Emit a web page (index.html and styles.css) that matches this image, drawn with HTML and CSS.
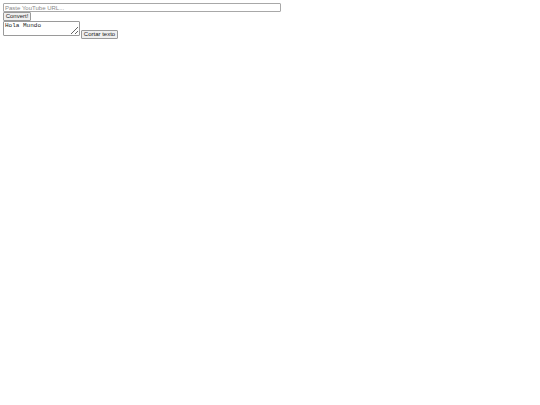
FILE: index.html
```html
<!DOCTYPE html>
<html>
<head>
<meta charset="utf-8">
<link rel="stylesheet" href="styles.css">
</head>
<body>
<div class="form">
  <input class="url" type="text" placeholder="Paste YouTube URL...">
  <div class="line"><button class="btn convert">Convert!</button></div>
  <div class="row">
    <textarea class="text">Hola Mundo</textarea>
    <button class="btn cut">Cortar texto</button>
  </div>
</div>
</body>
</html>
```
FILE: styles.css
```css
html, body { background: #fff; }
body { margin: 3px; font-family: "Liberation Sans", Arial, sans-serif; }
.form { display: flex; flex-direction: column; align-items: flex-start; }
.url {
  box-sizing: border-box; width: 278px; height: 9px; margin: 0; padding: 0 1px;
  border: 1px solid #a8a8a8; border-radius: 1px; font-family: "Liberation Sans", Arial, sans-serif;
  font-size: 6px; line-height: 7px; color: #222; outline: none;
}
.url::placeholder { color: #8a8a8a; }
.line { display: flex; }
.btn {
  box-sizing: border-box; height: 9px; margin: 0; padding: 0 1px;
  border: 1px solid #9a9a9a; border-radius: 1px; background: #efefef;
  font-family: "Liberation Sans", Arial, sans-serif; font-size: 6px; line-height: 7px; color: #222;
}
.convert { width: 28px; }
.row { display: flex; align-items: flex-start; gap: 1px; }
.text {
  box-sizing: border-box; width: 77px; height: 15px; margin: 0; padding: 0 1px;
  border: 1px solid #9a9a9a; border-radius: 1px; resize: both;
  font-family: "Liberation Mono", "Courier New", monospace; font-size: 6px; line-height: 7px; color: #222;
  overflow: hidden;
}
.cut { width: 37px; margin-top: 9px; }
```
